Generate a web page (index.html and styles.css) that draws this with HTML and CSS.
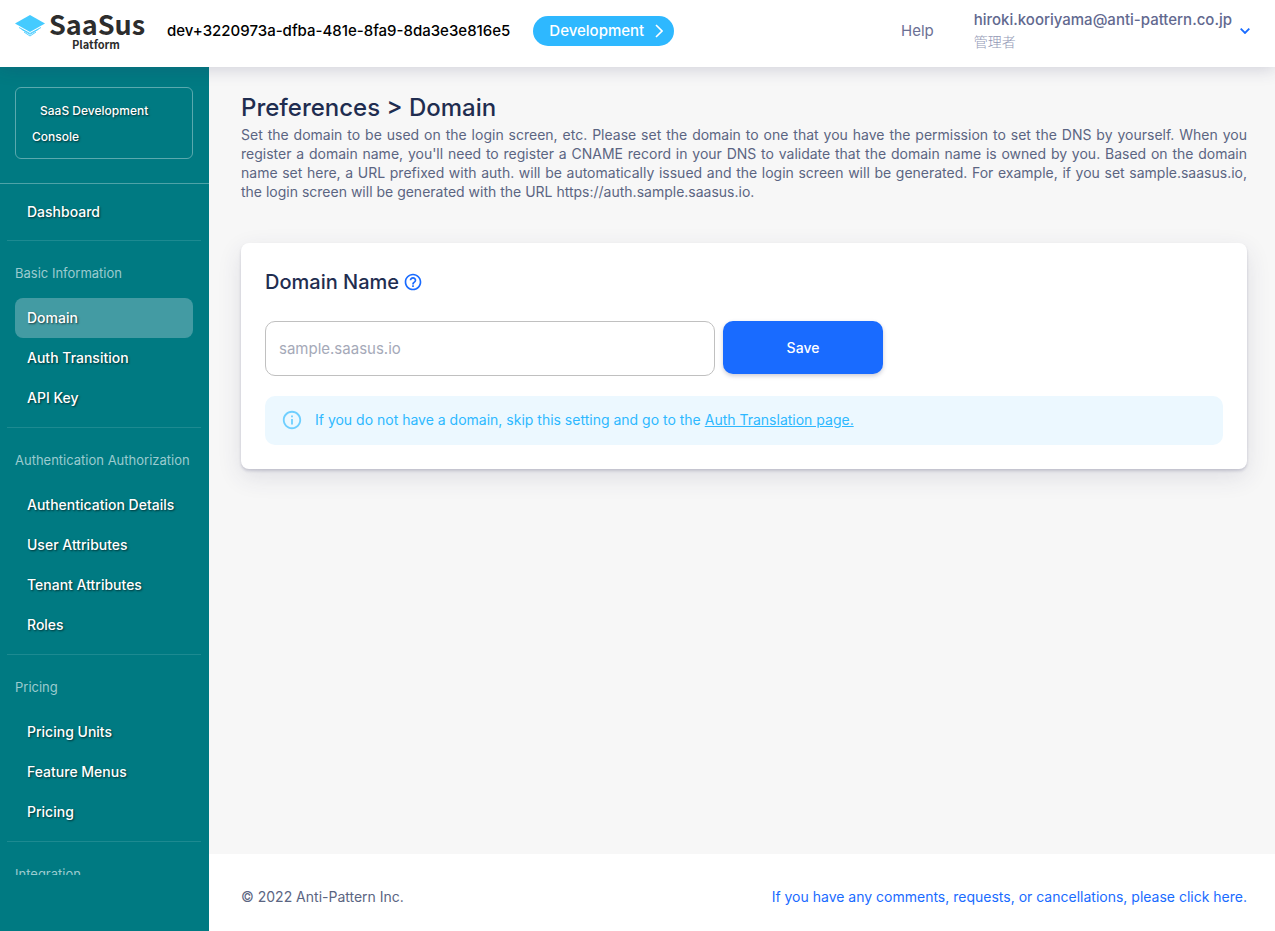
FILE: index.html
```html
<!DOCTYPE html>
<html lang="en">
<head>
<meta charset="utf-8">
<meta name="viewport" content="width=device-width, initial-scale=1">
<title>Preferences &gt; Domain | SaaSus Platform</title>
<link rel="stylesheet" href="styles.css">
</head>
<body>
<div class="app">
  <header class="header">
    <a class="brand" href="#" aria-label="SaaSus Platform">
      <svg class="brand-mark" viewBox="0 0 30 22" aria-hidden="true">
        <path d="M15 0 30 8.500 15 17 0 8.500Z" fill="#45cbff"/>
        <path d="M4 12.500 15 18.500 26 12.500M6.500 14.300 15 19.300 23.500 14.300M9 17 15 21 21 17" fill="none" stroke="#45cbff" stroke-width="0.900"/>
      </svg>
      <span class="brand-text">
        <span class="brand-name">SaaSus</span>
        <span class="brand-sub">Platform</span>
      </span>
    </a>
    <span class="tenant">dev+3220973a-dfba-481e-8fa9-8da3e3e816e5</span>
    <button class="env" type="button">Development
      <svg width="8" height="14" viewBox="0 0 8 14" aria-hidden="true"><path d="M1 1l6 6-6 6" fill="none" stroke="currentColor" stroke-width="1.600"/></svg>
    </button>
    <div class="header-end">
      <a class="help" href="#">Help</a>
      <button class="account" type="button">
        <span class="account-text">
          <span class="account-mail">hiroki.kooriyama@anti-pattern.co.jp</span>
          <span class="account-role" lang="ja">管理者</span>
        </span>
        <svg width="10" height="6" viewBox="0 0 10 6" aria-hidden="true"><path d="M.7.7 5 5 9.300.7" fill="none" stroke="#196bff" stroke-width="1.800"/></svg>
      </button>
    </div>
  </header>

  <aside class="sidebar">
    <div class="console-wrap"><a class="console" href="#">SaaS Development Console</a></div>
    <nav class="nav" aria-label="Main">
      <section class="nav-section nav-first">
        <a class="nav-item" href="#">Dashboard</a>
      </section>
      <section class="nav-section">
        <h2 class="nav-title">Basic Information</h2>
        <a class="nav-item is-active" href="#" aria-current="page">Domain</a>
        <a class="nav-item" href="#">Auth Transition</a>
        <a class="nav-item" href="#">API Key</a>
      </section>
      <section class="nav-section">
        <h2 class="nav-title">Authentication Authorization</h2>
        <a class="nav-item" href="#">Authentication Details</a>
        <a class="nav-item" href="#">User Attributes</a>
        <a class="nav-item" href="#">Tenant Attributes</a>
        <a class="nav-item" href="#">Roles</a>
      </section>
      <section class="nav-section">
        <h2 class="nav-title">Pricing</h2>
        <a class="nav-item" href="#">Pricing Units</a>
        <a class="nav-item" href="#">Feature Menus</a>
        <a class="nav-item" href="#">Pricing</a>
      </section>
      <section class="nav-section">
        <h2 class="nav-title">Integration</h2>
      </section>
    </nav>
  </aside>

  <div class="page">
    <main class="main">
      <h1 class="title">Preferences &gt; Domain</h1>
      <p class="lead">Set the domain to be used on the login screen, etc. Please set the domain to one that you have the permission to set the DNS by yourself. When you register a domain name, you'll need to register a CNAME record in your DNS to validate that the domain name is owned by you. Based on the domain name set here, a URL prefixed with auth. will be automatically issued and the login screen will be generated. For example, if you set sample.saasus.io, the login screen will be generated with the URL https://auth.sample.saasus.io.</p>
      <section class="card">
        <h2 class="card-title">
          <label for="domain">Domain Name</label>
          <svg width="20" height="20" viewBox="0 0 24 24" role="img" aria-label="Help"><path fill="#196bff" d="M11 18h2v-2h-2v2zm1-16C6.480 2 2 6.480 2 12s4.480 10 10 10 10-4.480 10-10S17.520 2 12 2zm0 18c-4.410 0-8-3.590-8-8s3.590-8 8-8 8 3.590 8 8-3.590 8-8 8zm0-14c-2.210 0-4 1.790-4 4h2c0-1.100.9-2 2-2s2 .9 2 2c0 2-3 1.750-3 5h2c0-2.250 3-2.500 3-5 0-2.210-1.790-4-4-4z"/></svg>
        </h2>
        <form class="form">
          <input class="field" id="domain" type="text" placeholder="sample.saasus.io">
          <button class="save" type="button">Save</button>
        </form>
        <div class="notice">
          <svg width="22" height="22" viewBox="0 0 24 24" aria-hidden="true"><path fill="#6fcfff" d="M11 7h2v2h-2zm0 4h2v6h-2zm1-9C6.480 2 2 6.480 2 12s4.480 10 10 10 10-4.480 10-10S17.520 2 12 2zm0 18c-4.410 0-8-3.590-8-8s3.590-8 8-8 8 3.590 8 8-3.590 8-8 8z"/></svg>
          <p class="notice-text">If you do not have a domain, skip this setting and go to the <a href="#">Auth Translation page.</a></p>
        </div>
      </section>
    </main>
    <footer class="footer">
      <span>© 2022 Anti-Pattern Inc.</span>
      <a class="contact" href="#">If you have any comments, requests, or cancellations, please click here.</a>
    </footer>
  </div>
</div>
</body>
</html>
```
FILE: styles.css
```css
* { box-sizing: border-box; }

body {
  margin: 0;
  background: #f7f7f7;
  color: #5b6582;
  font-family: Inter, "Noto Sans CJK JP", sans-serif;
  font-size: 14px;
  line-height: 20px;
}

a { color: inherit; text-decoration: none; }
button { border: 0; font: inherit; cursor: pointer; }
h1, h2, p { margin: 0; }
svg { flex: none; }

.app {
  display: grid;
  grid-template: auto minmax(0, 1fr) / 209px minmax(0, 1fr);
  height: 100vh;
}

.header {
  position: relative;
  z-index: 1;
  grid-column: 1 / -1;
  display: flex;
  align-items: center;
  min-height: 67px;
  padding: 6px 25px 12px 15px;
  background: #fff;
  box-shadow: 0 2px 16px rgba(50, 50, 93, 0.2);
}

.brand { display: flex; gap: 4px; color: #2d2d2d; }
.brand-mark { width: 30px; height: 22px; margin-top: 4px; }
.brand-text { display: flex; flex-direction: column; width: 94px; }
.brand-name {
  font: 700 27px/26px "Noto Sans CJK JP", "Noto Sans", sans-serif;
}
.brand-sub {
  font: 700 11px/14px "Noto Sans CJK JP", "Noto Sans", sans-serif;
  text-align: center;
}

.tenant { margin-left: 24px; color: #000; font-size: 15px; font-weight: 500; }

.env {
  display: flex;
  align-items: center;
  gap: 11px;
  height: 30px;
  margin-left: 23px;
  padding: 0 11px 0 16px;
  border-radius: 15px;
  background: #2eb8ff;
  color: #fff;
  font-size: 15px;
  font-weight: 500;
}

.header-end { display: flex; align-items: center; gap: 40px; margin-left: auto; }
.help { color: #6b7094; font-size: 15px; }
.account {
  display: flex;
  align-items: center;
  gap: 8px;
  padding: 0;
  background: none;
  text-align: left;
}
.account-text { display: flex; flex-direction: column; gap: 2px; }
.account-mail { color: #62698f; font-size: 15px; font-weight: 500; line-height: 20px; }
.account-role { color: #9298b5; font-weight: 300; line-height: 20px; }

.sidebar {
  display: flex;
  flex-direction: column;
  min-height: 0;
  padding-bottom: 56px;
  background: #007a82;
  color: #fff;
}
.console-wrap { padding: 20px 16px 24px 15px; border-bottom: 1px solid #4ea3a8; }
.console {
  display: block;
  padding: 10px 16px 8px;
  border: 1px solid #5aa9ae;
  border-radius: 6px;
  font-size: 12px;
  font-weight: 500;
  line-height: 26px;
  text-indent: 8px;
  text-shadow: 1px 1px 2px rgba(0, 0, 0, 0.6);
}
.nav { flex: 1; min-height: 0; overflow: hidden; padding: 8px 8px 0 7px; }
.nav-section { padding: 22px 8px 9px; border-top: 1px solid #1d8a91; }
.nav-first { padding-top: 0; padding-bottom: 8px; border-top: 0; }
.nav-title {
  margin-bottom: 15px;
  color: #9bcbcf;
  font-size: 13px;
  font-weight: 400;
  line-height: 20px;
}
.nav-item {
  display: block;
  padding: 10px 12px;
  border-radius: 8px;
  font-weight: 500;
  line-height: 20px;
  text-shadow: 1px 1px 2px rgba(0, 0, 0, 0.6);
}
.nav-item.is-active { background: #439ba3; }

.page { display: flex; flex-direction: column; min-width: 0; overflow: auto; }
.main { flex: 1; padding: 24px 28px 32px 32px; }
.title { color: #1f2d50; font-size: 24px; font-weight: 500; line-height: 34px; }
.lead { line-height: 19px; text-align: justify; }

.card {
  margin-top: 42px;
  padding: 24px;
  border-radius: 8px;
  background: #fff;
  box-shadow: 0 2px 3px rgba(50, 50, 93, 0.2), 0 8px 24px rgba(50, 50, 93, 0.12);
}
.card-title {
  display: flex;
  align-items: center;
  gap: 4px;
  color: #1f2d50;
  font-size: 20px;
  font-weight: 500;
  line-height: 30px;
}
.form { display: flex; flex-wrap: wrap; gap: 8px; margin-top: 24px; }
.field {
  width: 450px;
  height: 55px;
  padding: 0 13px;
  border: 1px solid #c0c0c0;
  border-radius: 10px;
  background: #fff;
  color: #1f2d50;
  font: inherit;
  font-size: 15px;
}
.field::placeholder { color: #a5a9b8; }
.save {
  width: 160px;
  height: 53px;
  border-radius: 10px;
  background: #196bff;
  box-shadow: 0 2px 4px rgba(50, 50, 93, 0.25);
  color: #fff;
  font-weight: 500;
}
.notice {
  display: flex;
  align-items: center;
  gap: 12px;
  margin-top: 20px;
  padding: 13px 16px 14px;
  border-radius: 10px;
  background: #ecf8ff;
  color: #2eb8ff;
}
.notice-text a { text-decoration: underline; }

.footer {
  display: flex;
  align-items: center;
  justify-content: space-between;
  gap: 24px;
  min-height: 77px;
  padding: 20px 28px 12px 32px;
  background: #fff;
}
.contact { color: #196bff; }
```
